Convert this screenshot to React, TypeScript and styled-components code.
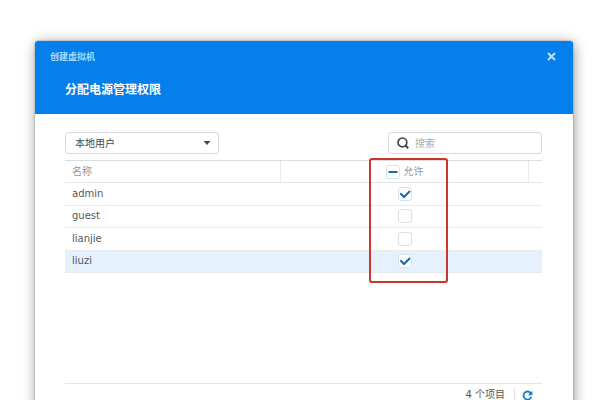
import React, { useEffect, useRef, useState } from "react";
import styled, { createGlobalStyle } from "styled-components";

const GlobalStyle = createGlobalStyle`
  * { box-sizing: border-box; }
  body {
    margin: 0;
    background: #fff;
    color: #50565c;
    font-family: "DejaVu Sans", "Noto Sans CJK SC", sans-serif;
    font-size: 10px;
    line-height: 14px;
  }
  button, input, select { font: inherit; color: inherit; }
`;

const Page = styled.div`
  height: 100vh;
  padding: 41px 37px 0 35px;
  overflow: hidden;
`;

const Dialog = styled.section`
  display: flex;
  flex-direction: column;
  height: calc(100vh - 20px);
  background: #fff;
  border-radius: 3px 3px 0 0;
  box-shadow: 0 0 2px rgba(0, 0, 0, 0.4), 1px 2px 14px rgba(0, 0, 0, 0.4);
`;

const Header = styled.header`
  height: 73px;
  flex: none;
  padding: 8px 14px 0 15px;
  background: #057feb;
  border-radius: 3px 3px 0 0;
`;

const TitleBar = styled.div`
  display: flex;
  align-items: center;
  justify-content: space-between;
  color: #a3dcff;
`;

const WindowTitle = styled.span`
  font-size: 9px;
  font-weight: 700;
`;

const CloseButton = styled.button`
  display: flex;
  padding: 3px;
  border: 0;
  background: none;
  color: #b4e2fb;
`;

const StepTitle = styled.h1`
  margin: 16px 0 0 15px;
  color: #fff;
  font-size: 12px;
  font-weight: 700;
  line-height: 20px;
`;

const Content = styled.div`
  display: flex;
  flex: 1;
  flex-direction: column;
  padding: 18px 31px 15px 30px;
`;

const Toolbar = styled.div`
  display: flex;
  justify-content: space-between;
  margin-bottom: 6px;
`;

const Field = styled.label`
  display: flex;
  position: relative;
  align-items: center;
  width: 154px;
  height: 22px;
  border: 1px solid #d5d9dd;
  border-radius: 3px;
  background: #fff;
`;

const Select = styled.select`
  width: 100%;
  height: 100%;
  padding: 1px 20px 0 9px;
  border: 0;
  appearance: none;
  background: none;
  color: #42484e;
`;

const Caret = styled.svg`
  position: absolute;
  right: 7px;
  pointer-events: none;
`;

const SearchIcon = styled.svg`
  flex: none;
  margin: 0 6px 0 8px;
`;

const SearchInput = styled.input`
  width: 100%;
  min-width: 0;
  height: 100%;
  padding: 0;
  border: 0;
  background: none;
  outline: none;
  &::placeholder { color: #a8adb2; opacity: 1; }
`;

const TableArea = styled.div`
  position: relative;
  flex: 1;
`;

const Table = styled.table`
  width: 100%;
  height: 113px;
  border-collapse: separate;
  border-spacing: 0;
  border-top: 1px solid #d9dde1;
  table-layout: fixed;
`;

const Column = styled.col<{ $width?: number }>`
  width: ${({ $width }) => ($width ? `${$width}px` : "auto")};
`;

const HeadCell = styled.th<{ $center?: boolean }>`
  height: 22px;
  padding: 0 0 0 ${({ $center }) => ($center ? 0 : 7)}px;
  border-right: 1px solid #e8ebed;
  border-bottom: 1px solid #e4e7ea;
  color: #92989e;
  font-weight: 400;
  text-align: ${({ $center }) => ($center ? "center" : "left")};
  &:last-child { border-right: 0; }
`;

const HeadLabel = styled.label`
  display: flex;
  align-items: center;
  justify-content: center;
  gap: 4px;
`;

const Row = styled.tr<{ $selected: boolean }>`
  background: ${({ $selected }) => ($selected ? "#e5f1fc" : "transparent")};
`;

const Cell = styled.td`
  padding: 0 0 0 7px;
  border-bottom: 1px solid #e8ebed;
`;

const CheckCell = styled(Cell)`
  padding: 0;
`;

const CheckWrap = styled.span`
  display: grid;
  width: 14px;
  height: 14px;
  margin: 0 auto;
  ${HeadLabel} & { margin: 0; }
  > * { grid-area: 1 / 1; }
`;

const CheckInput = styled.input`
  width: 14px;
  height: 14px;
  margin: 0;
  border: 1px solid #dcdfe3;
  border-radius: 3px;
  appearance: none;
  background: #fff;
  &:checked, &:indeterminate { border-color: #cfe3f0; }
`;

const CheckMark = styled.svg`
  z-index: 1;
  pointer-events: none;
`;

const Highlight = styled.div`
  position: absolute;
  top: -2px;
  right: 94px;
  width: 79px;
  height: 125px;
  border: 2px solid #c9372c;
  border-radius: 3px;
  pointer-events: none;
`;

const Footer = styled.footer`
  display: flex;
  align-items: center;
  justify-content: flex-end;
  height: 23px;
  border-top: 1px solid #e3e6e9;
`;

const RefreshButton = styled.button`
  display: flex;
  align-items: center;
  height: 14px;
  margin-left: 9px;
  padding: 0 9px 0 7px;
  border: 0;
  border-left: 1px solid #dfe2e5;
  background: none;
  color: #1c7fbd;
`;

interface CheckboxProps {
  checked: boolean;
  mixed?: boolean;
  labelledBy?: string;
  onChange: () => void;
}

function Checkbox({ checked, mixed = false, labelledBy, onChange }: CheckboxProps) {
  const ref = useRef<HTMLInputElement>(null);
  useEffect(() => {
    if (ref.current) ref.current.indeterminate = mixed;
  }, [mixed]);
  return (
    <CheckWrap>
      <CheckInput ref={ref} type="checkbox" checked={checked} onChange={onChange} aria-labelledby={labelledBy} />
      {(mixed || checked) && (
        <CheckMark width="14" height="14" viewBox="0 0 14 14" fill="none" stroke="#1a68a5" strokeWidth="2">
          <path d={mixed ? "M2.5 7h9" : "M2.3 6.3l3.7 3.7 6-6"} />
        </CheckMark>
      )}
    </CheckWrap>
  );
}

const users = ["admin", "guest", "lianjie", "liuzi"];

export default function App() {
  const [allowed, setAllowed] = useState<string[]>(["admin", "liuzi"]);
  const all = allowed.length === users.length;
  const toggle = (user: string) =>
    setAllowed((prev) => (prev.includes(user) ? prev.filter((u) => u !== user) : [...prev, user]));

  return (
    <>
      <GlobalStyle />
      <Page>
        <Dialog role="dialog" aria-labelledby="step-title">
          <Header>
            <TitleBar>
              <WindowTitle>创建虚拟机</WindowTitle>
              <CloseButton type="button" aria-label="关闭">
                <svg width="9" height="9" viewBox="0 0 9 9" fill="none" stroke="currentColor" strokeWidth="2">
                  <path d="M1 1l7 7M8 1L1 8" />
                </svg>
              </CloseButton>
            </TitleBar>
            <StepTitle id="step-title">分配电源管理权限</StepTitle>
          </Header>
          <Content>
            <Toolbar>
              <Field>
                <Select aria-label="本地用户">
                  <option>本地用户</option>
                </Select>
                <Caret width="8" height="4" viewBox="0 0 8 4" fill="#42484e">
                  <path d="M0.5 0h7L4 4z" />
                </Caret>
              </Field>
              <Field>
                <SearchIcon width="12" height="12" viewBox="0 0 12 12" fill="none" stroke="#3f464c">
                  <circle cx="5.4" cy="5.4" r="4.4" strokeWidth="1.7" />
                  <path d="M8 8l3.2 3.2" strokeWidth="2" />
                </SearchIcon>
                <SearchInput type="text" placeholder="搜索" aria-label="搜索" />
              </Field>
            </Toolbar>
            <TableArea>
              <Table>
                <colgroup>
                  <Column />
                  <Column $width={248} />
                  <Column $width={13} />
                </colgroup>
                <thead>
                  <tr>
                    <HeadCell scope="col">名称</HeadCell>
                    <HeadCell scope="col" $center>
                      <HeadLabel>
                        <Checkbox
                          checked={all}
                          mixed={!all && allowed.length > 0}
                          onChange={() => setAllowed(all ? [] : users)}
                        />
                        允许
                      </HeadLabel>
                    </HeadCell>
                    <HeadCell aria-hidden="true" />
                  </tr>
                </thead>
                <tbody>
                  {users.map((user) => (
                    <Row key={user} $selected={user === "liuzi"}>
                      <Cell id={`user-${user}`}>{user}</Cell>
                      <CheckCell>
                        <Checkbox
                          checked={allowed.includes(user)}
                          labelledBy={`user-${user}`}
                          onChange={() => toggle(user)}
                        />
                      </CheckCell>
                      <Cell />
                    </Row>
                  ))}
                </tbody>
              </Table>
              <Highlight />
            </TableArea>
            <Footer>
              <span>4 个项目</span>
              <RefreshButton type="button" aria-label="刷新">
                <svg width="11" height="11" viewBox="0 0 11 11" fill="none">
                  <path d="M8.7 3.1A4 4 0 1 0 9.3 6.8" stroke="currentColor" strokeWidth="1.8" />
                  <path d="M10.4 0.8v4.4H6z" fill="currentColor" />
                </svg>
              </RefreshButton>
            </Footer>
          </Content>
        </Dialog>
      </Page>
    </>
  );
}
